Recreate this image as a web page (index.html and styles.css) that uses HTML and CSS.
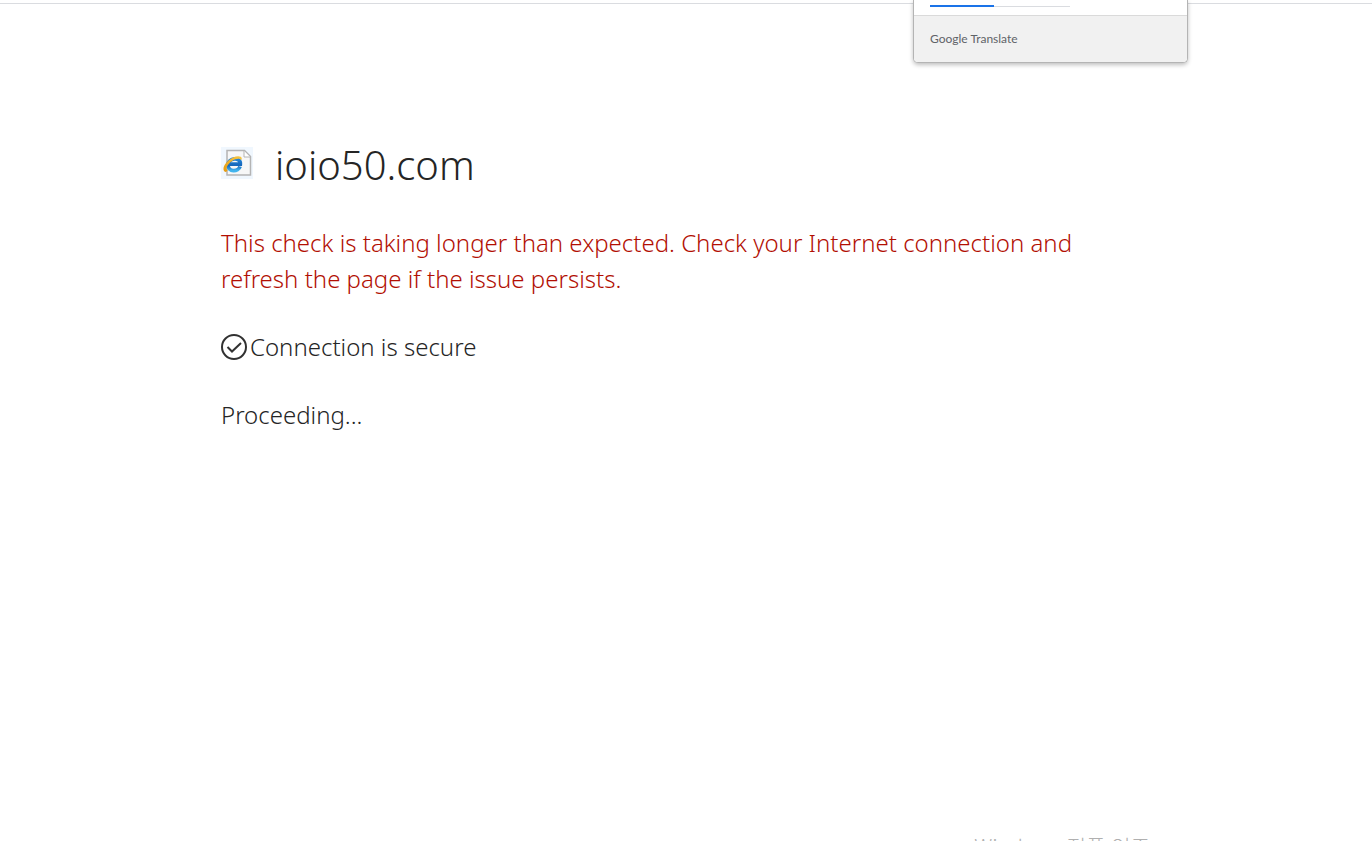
FILE: index.html
```
<!DOCTYPE html>
<html lang="en">
<head>
<meta charset="utf-8">
<meta name="viewport" content="width=device-width, initial-scale=1">
<title>ioio50.com</title>
<link rel="stylesheet" href="styles.css">
</head>
<body>
<div class="toolbar-edge"></div>
<aside class="translate-popup" aria-label="Google Translate">
  <div class="translate-tabs"><span class="tab-line active"></span><span class="tab-line"></span></div>
  <div class="translate-footer">Google Translate</div>
</aside>
<main class="content">
  <header class="site">
    <svg class="site-icon" viewBox="0 0 32 32" aria-hidden="true">
      <defs>
        <linearGradient id="blue" x1="0" y1="0" x2="0" y2="1">
          <stop offset="0" stop-color="#2586d8"/><stop offset=".55" stop-color="#1465ba"/><stop offset="1" stop-color="#43b5ee"/>
        </linearGradient>
        <linearGradient id="gold" x1="0" y1="1" x2="1" y2="0">
          <stop offset="0" stop-color="#e59a10"/><stop offset="1" stop-color="#f6c744"/>
        </linearGradient>
      </defs>
      <rect width="32" height="32" fill="#f0f7fe"/>
      <path d="M6 3.500H23.500L29.500 9.500V28H6Z" fill="#f7f7f7" stroke="#b4b4b4" stroke-width="1.500"/>
      <path d="M23 4V10H29" fill="#fff" stroke="#b4b4b4"/>
      <path d="M19 19.500C17.500 25 7 25.500 7 18C7 10.500 20 9.500 19.300 17.200H9" fill="none" stroke="url(#blue)" stroke-width="3.800"/>
      <path d="M5 25C-.5 24 3.500 14.500 12 10.500C17 8.300 22 9 20.500 13C18.500 10.800 15 11.500 11 14C7 17 4 21 6.500 23.500Z" fill="url(#gold)"/>
    </svg>
    <h1>ioio50.com</h1>
  </header>
  <p class="warning">This check is taking longer than expected. Check your Internet connection and refresh the page if the issue persists.</p>
  <p class="status">
    <svg class="check-icon" viewBox="0 0 26 26" fill="none" stroke="#313131" stroke-width="2" aria-hidden="true">
      <circle cx="13" cy="13" r="12"/><path d="M6.500 13L11 17.500L20 9"/>
    </svg>
    <span>Connection is secure</span>
  </p>
  <p class="progress">Proceeding...</p>
</main>
<div class="activation" lang="ko">Windows 정품 인증</div>
</body>
</html>
```
FILE: styles.css
```
* { box-sizing: border-box; }
html, body { height: 100%; }
body {
  margin: 0;
  position: relative;
  overflow: hidden;
  background: #fff;
  color: #252525;
  font-family: "Malgun Gothic", "Noto Sans", "Noto Sans CJK KR", sans-serif;
}
h1, p { margin: 0; font-weight: 300; }
.toolbar-edge { height: 4px; border-bottom: 1px solid #dadce0; }
.content {
  max-width: 978px;
  margin: 0 auto;
  padding: 131px 42px 0 24px;
  font-size: 24px;
  line-height: 36px;
}
.site { display: flex; align-items: center; gap: 22px; height: 60px; }
.site-icon { width: 32px; height: 32px; margin-bottom: 4px; }
h1 { font-size: 40px; line-height: 60px; }
.warning { margin-top: 30px; color: #b20f03; }
.status { display: flex; align-items: center; gap: 3px; margin-top: 32px; }
.check-icon { width: 26px; height: 26px; }
.progress { margin-top: 32px; }
.translate-popup {
  position: absolute;
  top: 0;
  right: 184px;
  width: 275px;
  border: 1px solid #b4b4b4;
  border-top: 0;
  border-radius: 0 0 5px 5px;
  background: #fff;
  box-shadow: 0 2px 4px rgba(0, 0, 0, .25);
  overflow: hidden;
}
.translate-tabs { display: flex; align-items: flex-end; height: 15px; padding: 0 16px 8px; }
.tab-line { width: 76px; height: 1px; background: #dadce0; }
.tab-line.active { width: 64px; height: 2px; background: #1a73e8; }
.translate-footer {
  border-top: 1px solid #dadada;
  padding: 15px 16px;
  background: #f1f1f1;
  color: #5f6368;
  font: 12px/16px Lato, sans-serif;
}
.activation {
  position: absolute;
  top: 100%;
  right: 222px;
  margin-top: -9px;
  color: #b0b0b0;
  font-family: "Noto Sans CJK KR", sans-serif;
  font-size: 21px;
  font-weight: 300;
  line-height: 28px;
  white-space: nowrap;
}
```
